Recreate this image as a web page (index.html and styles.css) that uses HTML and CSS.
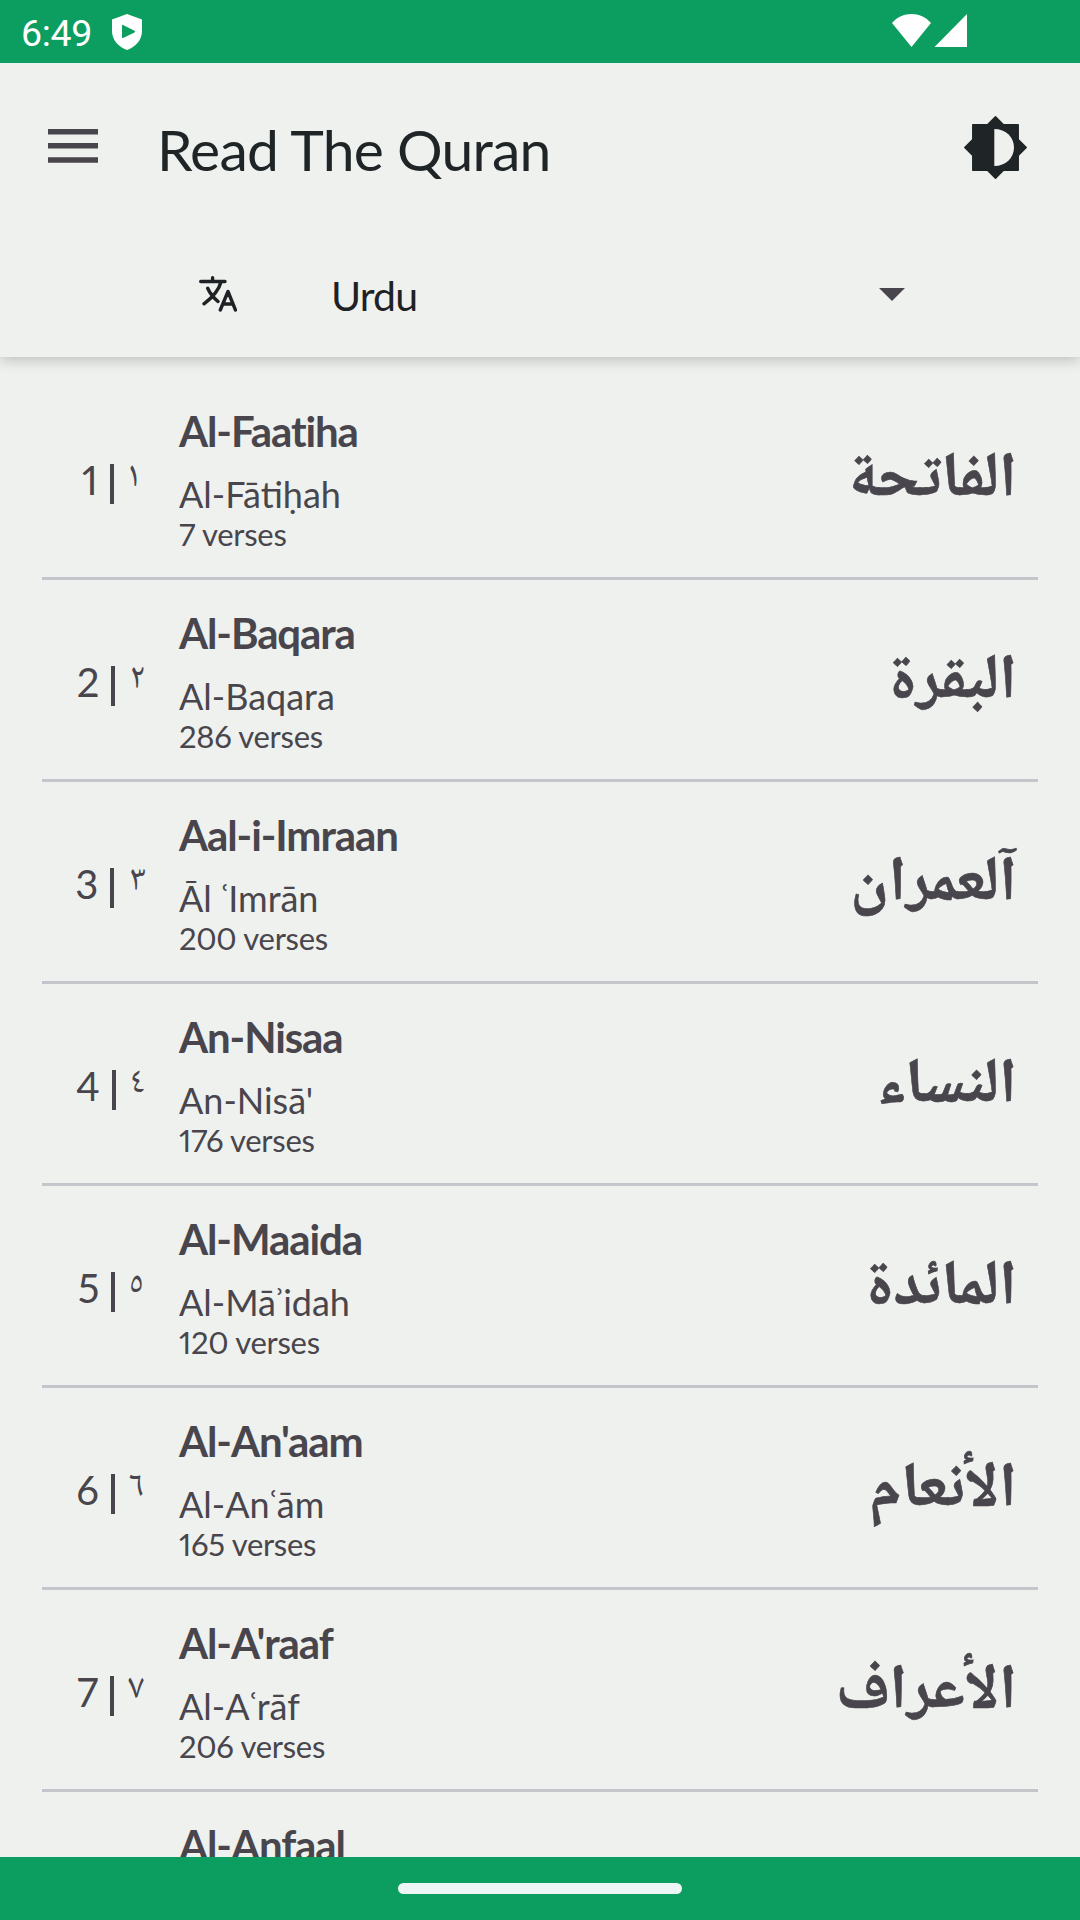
FILE: index.html
```html
<!DOCTYPE html>
<html lang="en">
<head>
<meta charset="utf-8">
<title>Read The Quran</title>
<link rel="stylesheet" href="styles.css">
</head>
<body>
<div class="screen">
  <div class="status">
    <span class="clock">6:49</span>
    <svg class="shield" viewBox="0 0 30 36"><path fill="#fff" d="M15 0 30 5.500V17C30 26 23.500 33 15 36 6.500 33 0 26 0 17V5.500Z"/><path fill="#0b9e60" d="M10 11.500Q10 10.500 11 11L22.500 16.800Q24 17.800 22.500 18.600L11 24Q10 24.300 10 23.500Z"/></svg>
    <svg class="signals" viewBox="0 0 75 33"><path fill="#fff" d="M0 9C10-3 29-3 39 9L19.500 33ZM75 0V33H42.500Z"/></svg>
  </div>
  <header class="header">
    <div class="toolbar">
      <svg class="menu" viewBox="0 0 50 34"><path fill="#48464c" d="M0 0h50v5.500H0zM0 14h50v5.500H0zM0 28.300h50v5.500H0z"/></svg>
      <h1 class="heading">Read The Quran</h1>
      <svg class="theme" viewBox="0 0 63 63"><path fill="#1f2526" fill-rule="evenodd" stroke="#1f2526" stroke-width="1.500" stroke-linejoin="round" d="M31.500.800 39.500 8.800H54.200V23.500L62.200 31.500 54.200 39.500V54.200H39.500L31.500 62.200 23.500 54.200H8.800V39.500L.800 31.500 8.800 23.500V8.800H23.500Z"/><path fill="#eff1ee" d="M30.300 13C41.500 13 50 21 50 31.500S41.500 50 30.300 50Z"/></svg>
    </div>
    <div class="language">
      <svg class="translate" viewBox="0 0 38 36" fill="none" stroke="#1f2224" stroke-width="3.400" stroke-linecap="round" stroke-linejoin="round"><path d="M1.700 5.500H26M13.600 1.700V5M22 6C19.500 15.500 12 22.500 5 27.800M8.700 12.200C11 17.500 15 22 19 25.500M21.300 34 29 15.500 36.500 34M24 28H34"/></svg>
      <span class="language-name">Urdu</span>
      <svg class="caret" viewBox="0 0 26 13"><path fill="#48464c" d="M0 0H26L13 13Z"/></svg>
    </div>
  </header>
  <main class="list">
    <article class="row"><div class="num">1<i></i><span class="ar-num">١</span></div><div class="names"><h2>Al-Faatiha</h2><p class="translit">Al-Fātiḥah</p><p class="verses">7 verses</p></div><div class="arabic" lang="ar" dir="rtl">الفاتحة</div></article>
    <article class="row"><div class="num">2<i></i><span class="ar-num">٢</span></div><div class="names"><h2>Al-Baqara</h2><p class="translit">Al-Baqara</p><p class="verses">286 verses</p></div><div class="arabic" lang="ar" dir="rtl">البقرة</div></article>
    <article class="row"><div class="num">3<i></i><span class="ar-num">٣</span></div><div class="names"><h2>Aal-i-Imraan</h2><p class="translit">Āl ʿImrān</p><p class="verses">200 verses</p></div><div class="arabic" lang="ar" dir="rtl">آلعمران</div></article>
    <article class="row"><div class="num">4<i></i><span class="ar-num">٤</span></div><div class="names"><h2>An-Nisaa</h2><p class="translit">An-Nisā'</p><p class="verses">176 verses</p></div><div class="arabic" lang="ar" dir="rtl">النساء</div></article>
    <article class="row"><div class="num">5<i></i><span class="ar-num">٥</span></div><div class="names"><h2>Al-Maaida</h2><p class="translit">Al-Māʾidah</p><p class="verses">120 verses</p></div><div class="arabic" lang="ar" dir="rtl">المائدة</div></article>
    <article class="row"><div class="num">6<i></i><span class="ar-num">٦</span></div><div class="names"><h2>Al-An'aam</h2><p class="translit">Al-Anʿām</p><p class="verses">165 verses</p></div><div class="arabic" lang="ar" dir="rtl">الأنعام</div></article>
    <article class="row"><div class="num">7<i></i><span class="ar-num">٧</span></div><div class="names"><h2>Al-A'raaf</h2><p class="translit">Al-Aʿrāf</p><p class="verses">206 verses</p></div><div class="arabic" lang="ar" dir="rtl">الأعراف</div></article>
    <article class="row"><div class="num"></div><div class="names"><h2>Al-Anfaal</h2></div></article>
  </main>
  <footer class="navbar"><div class="pill"></div></footer>
</div>
</body>
</html>
```
FILE: styles.css
```css
* { box-sizing: border-box; margin: 0; padding: 0; }
body { background: #eff1ee; font-family: Lato, "Noto Sans", "DejaVu Sans", sans-serif; color: #48464c; }
svg { display: block; flex: none; }
.screen { width: 1080px; height: 1920px; display: flex; flex-direction: column; overflow: hidden; background: #eff1ee; }
.status { height: 63px; flex: none; background: #0b9e60; display: flex; align-items: flex-start; padding: 14px 113px 0 21px; }
.clock { font: 37.500px/38px Roboto, sans-serif; color: #fff; width: 91px; letter-spacing: -0.3px; }
.shield { width: 30px; height: 36px; }
.signals { width: 75px; height: 33px; margin-left: auto; }
.header { height: 294px; flex: none; box-shadow: 0 2px 14px rgba(0,0,0,.24); clip-path: inset(0 0 -24px 0); }
.toolbar { height: 169px; display: flex; align-items: center; padding: 0 53px 0 48px; }
.menu { width: 50px; height: 34px; margin-bottom: 3px; }
.heading { font-size: 57px; font-weight: 400; line-height: 70px; color: #1f2526; margin-left: 59px; padding-top: 3px; letter-spacing: -0.750px; white-space: nowrap; }
.theme { width: 63px; height: 63px; margin-left: auto; }
.language { height: 125px; display: flex; align-items: flex-start; padding: 44px 175px 0 199px; }
.translate { width: 38px; height: 36px; }
.language-name { font-size: 41px; line-height: 50px; color: #1f2224; margin: -5px 0 0 94px; letter-spacing: -0.800px; }
.caret { width: 26px; height: 13px; margin: 12px 0 0 auto; }
.list { flex: 1; min-height: 0; overflow: hidden; padding: 21px 42px 0; }
.row { height: 202px; display: flex; border-bottom: 3px solid #c6c5cc; }
.num { width: 137px; display: flex; justify-content: center; font-size: 40px; line-height: 48px; padding-top: 78px; font-variant-numeric: proportional-nums; }
.num i { width: 4px; height: 40px; background: #48464c; margin: 8px 14px 0 12px; }
.ar-num { font-family: "Noto Naskh Arabic", "DejaVu Sans", sans-serif; font-size: 36px; line-height: 46px; }
.names { padding-top: 28px; white-space: nowrap; }
.names h2 { font-size: 42px; font-weight: 700; line-height: 50px; letter-spacing: -1.1px; }
.translit { font-size: 36px; line-height: 44px; margin-top: 16px; }
.verses { font-size: 31px; line-height: 38px; margin-top: -1px; letter-spacing: -0.300px; font-variant-numeric: proportional-nums; }
.arabic { margin-left: auto; padding: 73px 21px 0 0; font-family: "Noto Naskh Arabic", "DejaVu Sans", sans-serif; font-weight: 700; font-size: 63px; line-height: 64px; -webkit-text-stroke: 0.6px #48464c; white-space: nowrap; }
.navbar { height: 63px; flex: none; background: #0b9e60; display: flex; justify-content: center; padding-top: 26px; }
.pill { width: 284px; height: 11px; border-radius: 6px; background: #edf5f5; }
```
